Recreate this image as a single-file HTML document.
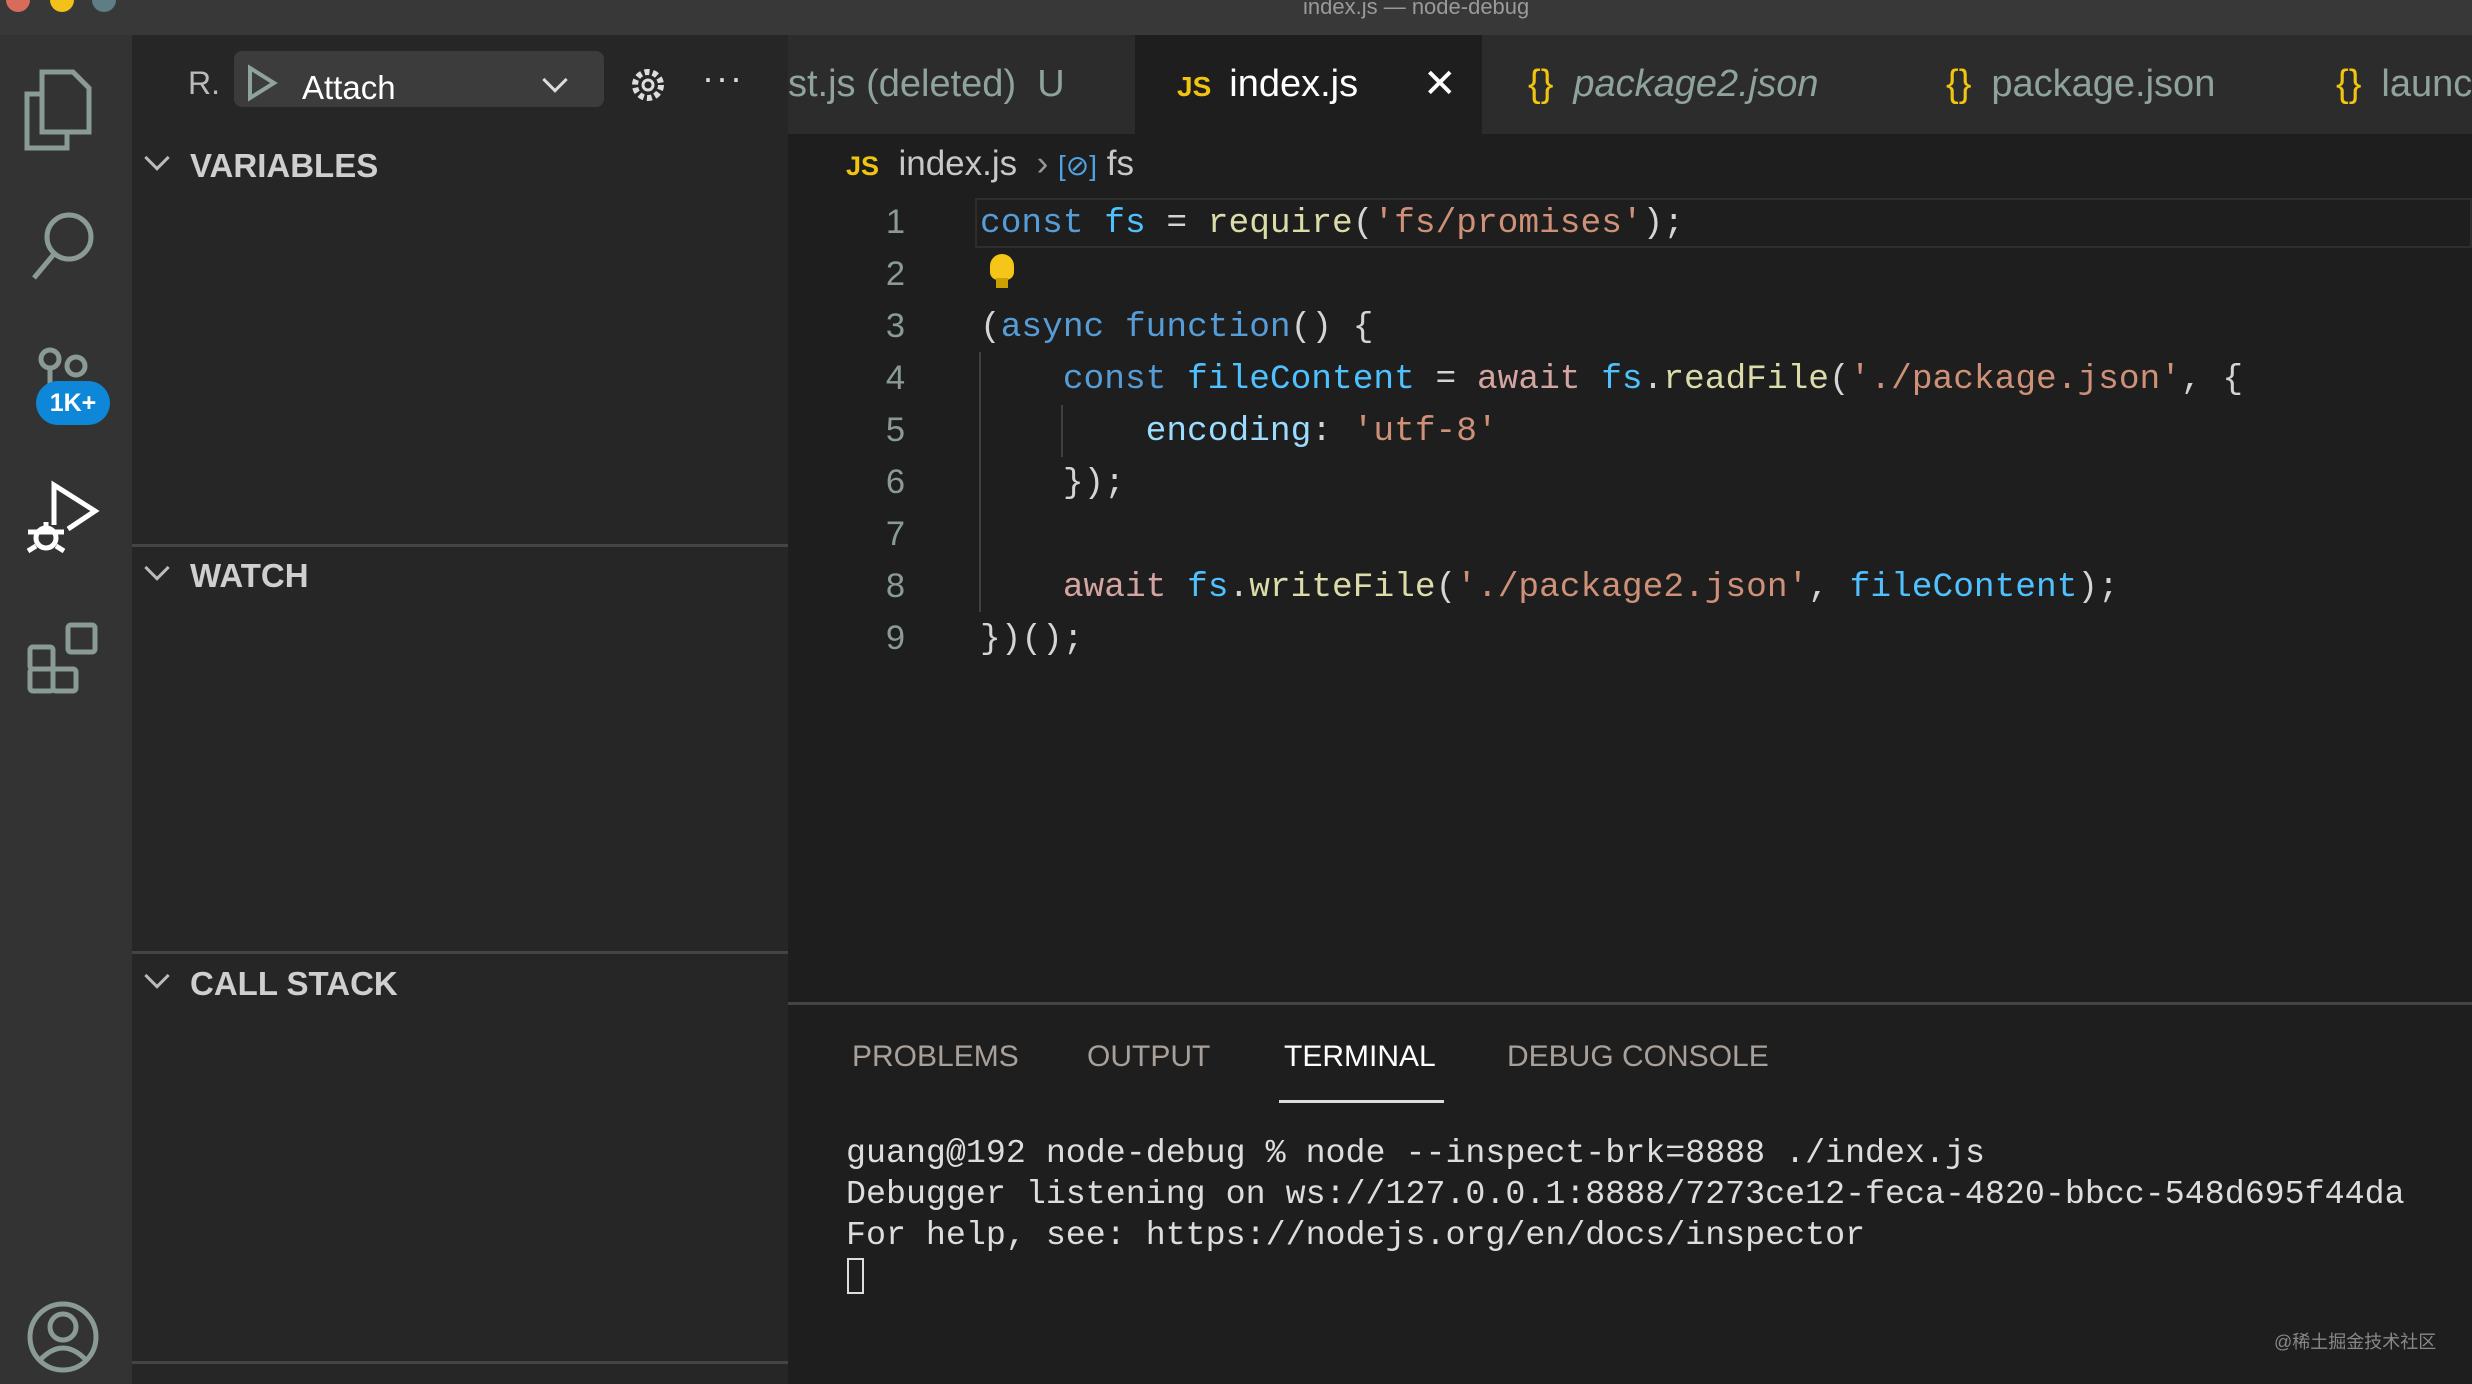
<!DOCTYPE html>
<html><head><meta charset="utf-8"><style>
*{margin:0;padding:0;box-sizing:border-box}
body{width:2472px;height:1384px;overflow:hidden;background:#1e1e1e;font-family:"Liberation Sans",sans-serif;position:relative}
.abs{position:absolute}
.mono{font-family:"Liberation Mono",monospace}
#title{left:0;top:0;width:2472px;height:35px;background:#383838;color:#9a9a9a;font-size:22px;text-align:center;line-height:20px}
#act{left:0;top:35px;width:132px;height:1349px;background:#333333}
#side{left:132px;top:35px;width:656px;height:1349px;background:#262626}
.sec{position:absolute;left:0;width:656px;color:#cfcfcf;font-weight:bold;font-size:33px}
.sec span{position:absolute;left:58px}
.chev{position:absolute;left:16px;width:18px;height:18px;border-right:3px solid #bbb;border-bottom:3px solid #bbb;transform:rotate(45deg)}
.div{position:absolute;left:0;width:656px;height:3px;background:#444}
#tabs{left:788px;top:35px;width:1684px;height:99px;background:#2c2c2c}
.tab{position:absolute;top:0;height:99px;font-size:38px;line-height:99px;color:#8fa39b}
.code{font-size:34.5px;line-height:52px;white-space:pre;color:#d4d4d4}
.kw{color:#569cd6}.v{color:#4fc1ff}.s{color:#ce9178}.f{color:#dcdcaa}.p{color:#9cdcfe}.c{color:#c586c0}
.ln{position:absolute;left:850px;width:55px;text-align:right;color:#8a9a94;font-size:34.5px;line-height:52px}
</style></head><body>
<div id="title" class="abs">
<div class="abs" style="left:6px;top:-12px;width:24px;height:24px;border-radius:50%;background:#d86c5a"></div>
<div class="abs" style="left:50px;top:-12px;width:24px;height:24px;border-radius:50%;background:#f3c21a"></div>
<div class="abs" style="left:92px;top:-12px;width:24px;height:24px;border-radius:50%;background:#5f7d85"></div>
<span style="position:absolute;left:1303px;top:-3px">index.js — node-debug</span></div>
<div id="act" class="abs">
<svg width="132" height="1349" style="position:absolute;left:0;top:0" fill="none" stroke="#8a9a94" stroke-width="5">
<path d="M42 37 h31 l16 16 v44 h-47 z M42 59 h-15 v54 h40 v-16"/>
<circle cx="69" cy="202" r="22"/><path d="M54 219 L34 243"/>
<circle cx="50" cy="324" r="9"/><circle cx="76" cy="331" r="9"/><path d="M50 333 v35"/>
<path d="M54 490 v-40 l41 26 l-27 18" stroke="#fff"/>
<circle cx="46" cy="503" r="10" stroke="#fff"/><path d="M28 497 h36 M28 516 l8 -5 M64 516 l-8 -5 M46 491 v-4" stroke="#fff"/>
<rect x="30" y="612" width="23" height="22" rx="3"/><rect x="30" y="634" width="23" height="22" rx="3"/><rect x="53" y="634" width="23" height="22" rx="3"/><rect x="68" y="590" width="27" height="27" rx="3"/>
<circle cx="63" cy="1302" r="33"/><circle cx="63" cy="1292" r="13"/><path d="M40 1325 q23 -24 46 0"/>
</svg>
<div class="abs" style="left:36px;top:346px;width:74px;height:44px;border-radius:22px;background:#0f87d8;color:#fff;font-weight:bold;font-size:25px;text-align:center;line-height:44px">1K+</div>
</div>
<div id="side" class="abs">
<div class="abs" style="left:56px;top:30px;color:#bbb;font-size:32px">R.</div>
<div class="abs" style="left:102px;top:16px;width:370px;height:56px;border-radius:8px;background:#3c3c3c"></div>
<svg class="abs" style="left:112px;top:28px" width="40" height="40" fill="none" stroke="#8fa39b" stroke-width="4"><path d="M6 5 l24 15 l-24 15 z"/></svg>
<div class="abs" style="left:170px;top:34px;color:#fff;font-size:33px">Attach</div>
<div class="abs" style="left:414px;top:36px;width:18px;height:18px;border-right:3px solid #ddd;border-bottom:3px solid #ddd;transform:rotate(45deg)"></div>
<svg class="abs" style="left:494px;top:28px" width="44" height="44" fill="none" stroke="#ddd" stroke-width="3"><circle cx="22" cy="22" r="5"/><circle cx="22" cy="22" r="13" stroke-dasharray="5 3.2" stroke-width="6"/></svg>
<div class="abs" style="left:570px;top:22px;color:#ddd;font-size:36px;letter-spacing:2px">···</div>
<div class="sec" style="top:112px"><div class="chev" style="top:2px"></div><span>VARIABLES</span></div>
<div class="div" style="top:509px"></div>
<div class="sec" style="top:522px"><div class="chev" style="top:2px"></div><span>WATCH</span></div>
<div class="div" style="top:916px"></div>
<div class="sec" style="top:930px"><div class="chev" style="top:2px"></div><span>CALL STACK</span></div>
<div class="div" style="top:1326px"></div>
</div>
<div id="tabs" class="abs">
<div class="tab" style="left:0;width:347px"><span>st.js (deleted)&nbsp; U</span></div>
<div class="tab" style="left:347px;width:347px;background:#1e1e1e;color:#fff"><span style="margin-left:42px;color:#f1c40f;font-weight:bold;font-size:28px">JS</span><span style="margin-left:18px">index.js</span><span style="position:absolute;left:288px;font-size:40px">✕</span></div>
<div class="tab" style="left:694px;width:418px"><span style="margin-left:46px;color:#f1c40f">{}</span><i style="margin-left:20px">package2.json</i></div>
<div class="tab" style="left:1112px;width:402px"><span style="margin-left:46px;color:#f1c40f">{}</span><span style="margin-left:20px">package.json</span></div>
<div class="tab" style="left:1514px;width:200px"><span style="margin-left:34px;color:#f1c40f">{}</span><span style="margin-left:20px">launch</span></div>
</div>
<div class="abs" style="left:846px;top:144px;font-size:35px;color:#c8c8c8"><span style="color:#f1c40f;font-weight:bold;font-size:27px">JS</span>&nbsp; index.js &nbsp;<span style="color:#999">›</span> <span style="color:#4fa3e0;font-size:28px">[⊘]</span> fs</div>
<div class="abs" style="left:975px;top:198px;width:1497px;height:50px;border:2px solid #2e2e2e"></div>
<div class="abs" style="left:979px;top:352px;width:2px;height:260px;background:#404040"></div>
<div class="abs" style="left:1061px;top:405px;width:2px;height:52px;background:#404040"></div>
<div class="abs" style="left:990px;top:254px;width:24px;height:26px;border-radius:12px 12px 8px 8px;background:#f5c518"></div>
<div class="abs" style="left:996px;top:278px;width:12px;height:10px;background:#c9a000"></div>
<div class="ln" style="top:196px">1<br>2<br>3<br>4<br>5<br>6<br>7<br>8<br>9</div>
<div class="abs mono code" style="left:980px;top:198px"><span class="kw">const</span> <span class="v">fs</span> = <span class="f">require</span>(<span class="s">'fs/promises'</span>);

(<span class="kw">async</span> <span class="kw">function</span>() {
    <span class="kw">const</span> <span class="v">fileContent</span> = <span style="color:#d4a5a0">await</span> <span class="v">fs</span>.<span class="f">readFile</span>(<span class="s">'./package.json'</span>, {
        <span class="p">encoding</span>: <span class="s">'utf-8'</span>
    });

    <span style="color:#d4a5a0">await</span> <span class="v">fs</span>.<span class="f">writeFile</span>(<span class="s">'./package2.json'</span>, <span class="v">fileContent</span>);
})();</div>
<div class="abs" style="left:788px;top:1002px;width:1684px;height:3px;background:#444"></div>
<div class="abs" style="left:852px;top:1040px;font-size:30px;color:#a9a09a">PROBLEMS</div>
<div class="abs" style="left:1087px;top:1040px;font-size:30px;color:#a9a09a">OUTPUT</div>
<div class="abs" style="left:1284px;top:1040px;font-size:30px;color:#fff">TERMINAL</div>
<div class="abs" style="left:1279px;top:1100px;width:165px;height:3px;background:#ddd"></div>
<div class="abs" style="left:1507px;top:1040px;font-size:30px;color:#a9a09a">DEBUG CONSOLE</div>
<div class="abs mono" style="left:846px;top:1133px;font-size:33.3px;line-height:41px;color:#ddd;white-space:pre">guang@192 node-debug % node --inspect-brk=8888 ./index.js
Debugger listening on ws://127.0.0.1:8888/7273ce12-feca-4820-bbcc-548d695f44da
For help, see: https://nodejs.org/en/docs/inspector</div>
<div class="abs" style="left:847px;top:1258px;width:17px;height:36px;border:2px solid #ddd"></div>
<div class="abs" style="left:2274px;top:1328px;font-size:18px;color:#888;font-family:'Liberation Sans','Noto Sans CJK SC',sans-serif">@稀土掘金技术社区</div>
</body></html>
